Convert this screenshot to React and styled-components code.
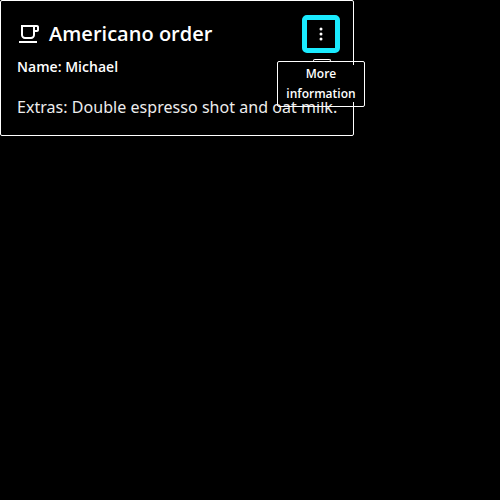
import React from "react";
import styled, { createGlobalStyle } from "styled-components";

const GlobalStyle = createGlobalStyle`
  html, body { margin: 0; background: #000; }
  body { height: 500px; color: #fff; font-family: "Open Sans", sans-serif; overflow: hidden; }
  * { box-sizing: border-box; }
`;
const Card = styled.article`
  position: relative;
  width: 354px;
  height: 136px;
  padding: 16px;
  border: 1px solid #fff;
  border-radius: 2px;
`;
const Header = styled.header`
  display: flex;
  align-items: flex-start;
  justify-content: space-between;
`;
const Title = styled.h1`
  display: flex;
  align-items: center;
  gap: 8px;
  margin: 0;
  height: 34px;
  font-size: 20px;
  line-height: 26px;
  font-weight: 600;
  letter-spacing: 0.02px;
  white-space: nowrap;
`;
const CupIcon = styled.svg`
  width: 24px;
  height: 24px;
  fill: currentColor;
`;
const MoreButton = styled.button`
  display: flex;
  align-items: center;
  justify-content: center;
  width: 38px;
  height: 38px;
  margin: -2px -3px 0 0;
  padding: 0;
  color: #fff;
  background: #000;
  border: 5px solid #1aebff;
  border-radius: 5px;
`;
const Name = styled.h2`
  margin: 4px 0 0;
  font-size: 14px;
  line-height: 20px;
  font-weight: 600;
  letter-spacing: 0.03px;
`;
const Extras = styled.p`
  margin: 18px 0 0;
  color: #ededed;
  font-family: "Noto Sans", sans-serif;
  font-size: 16px;
  line-height: 24px;
  letter-spacing: 0.04px;
  white-space: nowrap;
`;
const Tooltip = styled.div`
  position: absolute;
  top: 60px;
  left: 276px;
  width: 88px;
  height: 46px;
  padding: 3px 3px 0;
  border: 1px solid #fff;
  border-radius: 2px;
  font-size: 12px;
  line-height: 20px;
  font-weight: 600;
  text-align: center;
`;
const TooltipText = styled.div`
  display: flex;
  justify-content: center;
  height: 37px;
  background: #000;
`;
const TooltipLines = styled.span`
  margin-top: -1px;
`;
const Caret = styled.span`
  position: absolute;
  top: -3px;
  left: 35px;
  width: 18px;
  height: 3px;
  border: 1px solid #fff;
  border-radius: 2px 2px 0 0;
  border-bottom: 0;
`;

export default function App() {
  return (
    <>
      <GlobalStyle />
      <Card>
        <Header>
          <Title>
            <CupIcon viewBox="0 0 24 24">
              <path d="M20 3H4v10c0 2.21 1.79 4 4 4h6c2.21 0 4-1.79 4-4v-3h2c1.11 0 2-.9 2-2V5c0-1.11-.89-2-2-2zm-4 10c0 1.1-.9 2-2 2H8c-1.1 0-2-.9-2-2V5h10v8zm4-5h-2V5h2v3zM2 19h18v2H2v-2z" />
            </CupIcon>
            Americano order
          </Title>
          <MoreButton aria-label="More information">
            <svg width="28" height="28" viewBox="0 0 28 28" fill="currentColor">
              <circle cx="14" cy="9" r="1.5" />
              <circle cx="14" cy="14" r="1.5" />
              <circle cx="14" cy="19" r="1.5" />
            </svg>
          </MoreButton>
        </Header>
        <Name>Name: Michael</Name>
        <Extras>Extras: Double espresso shot and oat milk.</Extras>
        <Tooltip role="tooltip">
          <Caret />
          <TooltipText>
            <TooltipLines>More<br />information</TooltipLines>
          </TooltipText>
        </Tooltip>
      </Card>
    </>
  );
}
